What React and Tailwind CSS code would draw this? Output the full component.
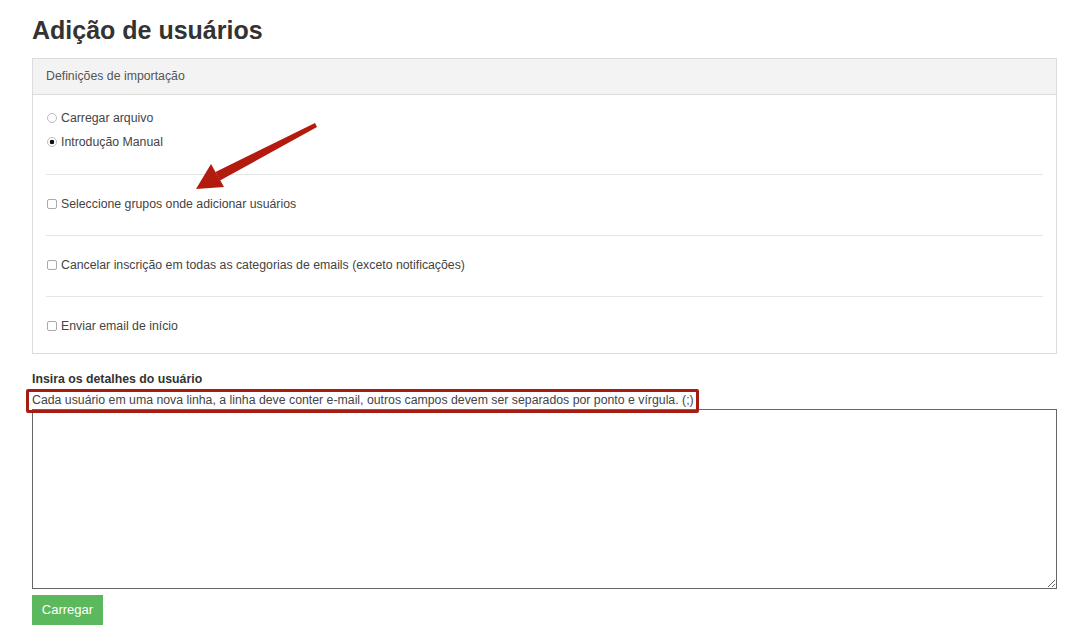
import { useState } from 'react'

const CHECKS = [
  { id: 'groups', label: 'Seleccione grupos onde adicionar usuários', pb: 'pb-[21px]' },
  { id: 'unsub', label: 'Cancelar inscrição em todas as categorias de emails (exceto notificações)', pb: 'pb-[21px]' },
  { id: 'welcome', label: 'Enviar email de início', pb: 'pb-[17px]' },
]

function Arrow() {
  // annotation arrow drawn over the screenshot
  return (
    <svg className="pointer-events-none absolute left-0 top-0" width="400" height="220" viewBox="0 0 400 220">
      <polygon points="315,123 317,127 220,180.5 215.5,172" fill="#b31b0f" />
      <polygon points="196,189 224,187 211,164" fill="#b31b0f" />
    </svg>
  )
}

export default function App() {
  const [mode, setMode] = useState('manual')
  const [checks, setChecks] = useState({})
  const [details, setDetails] = useState('')

  return (
    <div className="relative min-h-screen bg-white px-8 pt-[14px] text-[#333] [font-family:'Liberation_Sans',Arial,sans-serif]">
      <h1 className="text-[25px] font-bold leading-8 text-[#333]">Adição de usuários</h1>

      <div className="mt-3 w-[1025px] border border-[#dcdcdc]">
        <div className="flex h-9 items-center border-b border-[#dcdcdc] bg-[#f3f3f3] px-[13px] text-[12.3px] text-[#555]">
          Definições de importação
        </div>

        <div className="px-[13px]">
          <div className="flex flex-col gap-1 pb-[22px] pt-[13px] text-[12.3px] text-[#444]">
            <label className="flex h-5 items-center gap-[4px] pl-[1px]">
              <input
                type="radio"
                name="mode"
                checked={mode === 'file'}
                onChange={() => setMode('file')}
                className="m-0 h-[10px] w-[10px] appearance-none rounded-full border border-[#bbb] bg-white checked:bg-[radial-gradient(circle,#111_0_2px,#fff_2.6px)]"
              />
              Carregar arquivo
            </label>
            <label className="flex h-5 items-center gap-[4px] pl-[1px]">
              <input
                type="radio"
                name="mode"
                checked={mode === 'manual'}
                onChange={() => setMode('manual')}
                className="m-0 h-[10px] w-[10px] appearance-none rounded-full border border-[#bbb] bg-white checked:bg-[radial-gradient(circle,#111_0_2px,#fff_2.6px)]"
              />
              Introdução Manual
            </label>
          </div>

          {CHECKS.map((item) => (
            <div key={item.id} className={`border-t border-[#e6e6e6] pt-[19px] ${item.pb}`}>
              <label className="flex h-5 items-center gap-[4px] pl-[1px] text-[12.3px] text-[#444]">
                <input
                  type="checkbox"
                  checked={!!checks[item.id]}
                  onChange={(e) => setChecks((prev) => ({ ...prev, [item.id]: e.target.checked }))}
                  className="m-0 h-[10px] w-[10px] appearance-none rounded-[2px] border border-[#aaa] bg-white checked:bg-[#333]"
                />
                {item.label}
              </label>
            </div>
          ))}
        </div>
      </div>

      <div className="mt-[17px] text-[12.3px] font-bold leading-4 text-[#333]">Insira os detalhes do usuário</div>
      <div className="relative mt-[5px] w-fit text-[12.3px] leading-4 text-[#444]">
        Cada usuário em uma nova linha, a linha deve conter e-mail, outros campos devem ser separados por ponto e vírgula. (;)
        <span className="pointer-events-none absolute -bottom-[5px] -left-[6px] -right-[5px] -top-[3px] rounded-[2px] border-[3px] border-[#a51d12]" />
      </div>

      <textarea
        value={details}
        onChange={(e) => setDetails(e.target.value)}
        className="mt-[1px] block h-[180px] w-[1025px] border border-[#666] bg-white p-1 text-[12px] outline-none"
      />

      <button className="mt-[6px] h-[30px] w-[71px] bg-[#5cb85c] text-[13px] text-white">Carregar</button>

      <Arrow />
    </div>
  )
}
